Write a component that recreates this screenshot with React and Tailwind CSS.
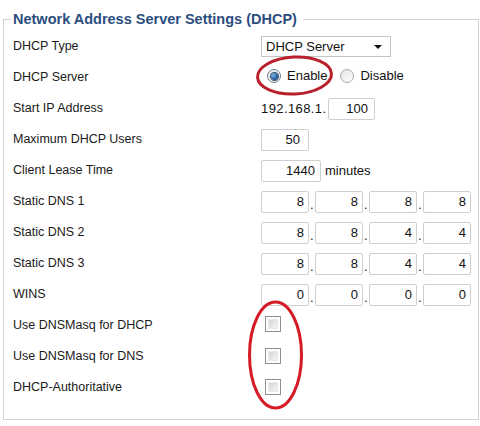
import React from "react";

const font = "font-['Liberation_Sans',Arial,sans-serif]";

function Field({ w, value, className = "" }) {
  return (
    <div
      className={`h-[22px] ${w} border border-[#cfcfcf] rounded-[2px] bg-white flex items-center justify-end pr-[4px] text-[13px] text-[#111] ${className}`}
    >
      {value}
    </div>
  );
}

function Dot() {
  return <span className="w-[6px] text-[13px] text-[#111] self-end pb-[2px] pl-[1px] leading-none">.</span>;
}

function IP({ parts }) {
  return (
    <div className="flex items-center">
      <Field w="w-[48px]" value={parts[0]} />
      <Dot />
      <Field w="w-[48px]" value={parts[1]} />
      <Dot />
      <Field w="w-[48px]" value={parts[2]} />
      <Dot />
      <Field w="w-[48px]" value={parts[3]} />
    </div>
  );
}

function Radio({ checked }) {
  return (
    <div
      className={`w-[14px] h-[14px] rounded-full border ${
        checked ? "border-[#6d7f92]" : "border-[#a9a9a9]"
      } bg-gradient-to-br from-[#e4e4e4] to-[#fdfdfd] flex items-center justify-center`}
    >
      {checked && (
        <div className="w-[7px] h-[7px] rounded-full bg-[radial-gradient(circle_at_35%_35%,#7fb4e8,#1f5aa0_60%,#0b2f5e)] ring-1 ring-[#3a4f66]" />
      )}
    </div>
  );
}

function Checkbox() {
  return (
    <div className="w-[16px] h-[16px] border border-[#8e8e8e] bg-white p-[2px]">
      <div className="w-full h-full bg-gradient-to-br from-[#d4d4d4] to-[#f8f8f8] border border-[#e8e8e8]" />
    </div>
  );
}

function Row({ label, children }) {
  return (
    <div className="h-[31px] flex items-center">
      <div className="w-[250px] pl-[2px] text-[12.5px] text-[#1a1a1a]">{label}</div>
      <div className="flex items-center">{children}</div>
    </div>
  );
}

export default function App() {
  return (
    <div className={`relative w-[480px] h-[426px] bg-white overflow-hidden ${font}`}>
      <fieldset className="ml-[3px] mt-[8px] w-[476px] border border-[#d2d2d2] pl-[7px] pt-[1px] pb-[16px]">
        <legend className="px-[2px] pr-[6px] leading-[22px] text-[14.5px] font-bold text-[#2b4d7e]">
          Network Address Server Settings (DHCP)
        </legend>
        <Row label="DHCP Type">
          <div className="w-[130px] h-[21px] border border-[#c4c4c4] bg-white flex items-center justify-between pl-[4px] pr-[8px] text-[13px] text-[#111]">
            <span>DHCP Server</span>
            <svg width="8" height="4" viewBox="0 0 8 4">
              <path d="M0 0 L8 0 L4 4 Z" fill="#111" />
            </svg>
          </div>
        </Row>
        <Row label="DHCP Server">
          <div className="flex items-center text-[13px] text-[#111] pl-[6px] -mt-[3px]">
            <Radio checked />
            <span className="ml-[6px]">Enable</span>
            <div className="ml-[13px]">
              <Radio />
            </div>
            <span className="ml-[6px]">Disable</span>
          </div>
        </Row>
        <Row label="Start IP Address">
          <span className="text-[13px] text-[#111] w-[67px] tracking-[0.4px]">192.168.1.</span>
          <Field w="w-[47px]" value="100" className="pr-[6px]" />
        </Row>
        <Row label="Maximum DHCP Users">
          <Field w="w-[48px]" value="50" className="pr-[8px]" />
        </Row>
        <Row label="Client Lease Time">
          <Field w="w-[60px]" value="1440" className="pr-[5px]" />
          <span className="ml-[4px] text-[13px] text-[#111]">minutes</span>
        </Row>
        <Row label="Static DNS 1">
          <IP parts={["8", "8", "8", "8"]} />
        </Row>
        <Row label="Static DNS 2">
          <IP parts={["8", "8", "4", "4"]} />
        </Row>
        <Row label="Static DNS 3">
          <IP parts={["8", "8", "4", "4"]} />
        </Row>
        <Row label="WINS">
          <IP parts={["0", "0", "0", "0"]} />
        </Row>
        <Row label="Use DNSMasq for DHCP">
          <div className="pl-[4px] -mt-[3px]">
            <Checkbox />
          </div>
        </Row>
        <Row label="Use DNSMasq for DNS">
          <div className="pl-[4px] -mt-[2px]">
            <Checkbox />
          </div>
        </Row>
        <Row label="DHCP-Authoritative">
          <div className="pl-[4px] -mt-[2px]">
            <Checkbox />
          </div>
        </Row>
      </fieldset>

      <svg
        className="absolute left-0 top-0 pointer-events-none"
        width="480"
        height="426"
        viewBox="0 0 480 426"
      >
        <ellipse
          cx="294.5"
          cy="75.5"
          rx="37"
          ry="18.5"
          fill="none"
          stroke="#b8202c"
          strokeWidth="3"
          transform="rotate(-3 294.5 75.5)"
        />
        <ellipse
          cx="275.5"
          cy="355"
          rx="26"
          ry="53"
          fill="none"
          stroke="#d51c26"
          strokeWidth="3"
        />
      </svg>
    </div>
  );
}
